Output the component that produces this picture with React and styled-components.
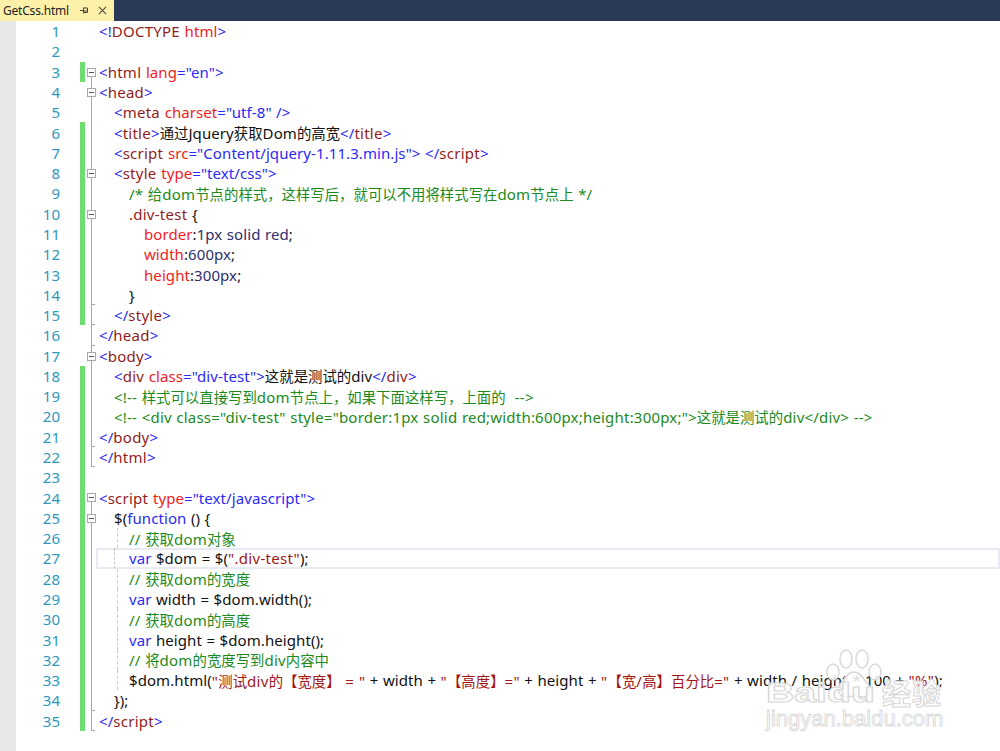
import React from "react";
import styled, { createGlobalStyle } from "styled-components";

const Global = createGlobalStyle`
  html, body { margin: 0; padding: 0; background: #fff; }
  body { width: 1000px; height: 751px; overflow: hidden; }
`;

const Page = styled.div`
  width: 1000px;
  height: 751px;
  display: flex;
  flex-direction: column;
  position: relative;
  overflow: hidden;
  font-family: "Noto Sans", "Noto Sans CJK SC", sans-serif;
`;

const TabBar = styled.div`
  height: 21px;
  flex: none;
  background: #2a3a56;
  display: flex;
`;

const Tab = styled.div`
  width: 114px;
  background: #fdf0a8;
  display: flex;
  align-items: center;
  padding-left: 3px;
  box-sizing: border-box;
  font-size: 12px;
  color: #222;
`;

const TabName = styled.span`
  width: 77px;
  white-space: nowrap;
  letter-spacing: -0.2px;
`;

const TabIcons = styled.span`
  display: flex;
  align-items: center;
  gap: 9px;
`;

const Editor = styled.div`
  flex: 1;
  display: flex;
`;

const Margin = styled.div`
  width: 16px;
  background: #e6e7e8;
  flex: none;
`;

const Lines = styled.div`
  flex: 1;
`;

const Row = styled.div`
  height: 20.29px;
  display: flex;
  align-items: center;
  position: relative;
  font-size: 15px;
  white-space: nowrap;
`;

const Num = styled.div`
  width: 44px;
  text-align: right;
  color: #2f97bb;
  font-size: 15px;
  flex: none;
`;

const Change = styled.div`
  width: 5px;
  margin-left: 20px;
  align-self: stretch;
  flex: none;
  background: ${(p) => (p.$on ? "#6edc6e" : "transparent")};
`;

const Fold = styled.div`
  width: 14px;
  align-self: stretch;
  flex: none;
  position: relative;
  &::before {
    content: "";
    display: ${(p) => (p.$kind ? "block" : "none")};
    position: absolute;
    left: 6px;
    top: ${(p) => (p.$first ? "50%" : "0")};
    bottom: 0;
    width: 1px;
    background: #a8a8a8;
  }
  &::after {
    content: "";
    display: ${(p) => (p.$kind === "end" ? "block" : "none")};
    position: absolute;
    left: 6px;
    bottom: 0;
    width: 4px;
    height: 1px;
    background: #a8a8a8;
  }
`;

const FoldBox = styled.span`
  position: absolute;
  left: 2px;
  top: 6px;
  width: 9px;
  height: 9px;
  box-sizing: border-box;
  border: 1px solid #a8a8a8;
  background: #fff;
  &::after {
    content: "";
    position: absolute;
    left: 1px;
    top: 3px;
    width: 5px;
    height: 1px;
    background: #555;
  }
`;

const Code = styled.div`
  padding-left: ${(p) => p.$indent * 15}px;
  position: relative;
  flex: 1;
  align-self: stretch;
  display: flex;
  align-items: center;
  ${(p) =>
    p.$current &&
    `box-shadow: inset 0 0 0 2px #e8e9f2; margin-left: -3px; padding-left: ${p.$indent * 15 + 3}px;`}
`;

const Guide = styled.span`
  position: absolute;
  left: 18px;
  top: 0;
  bottom: 0;
  border-left: 1px dashed #c8c8c8;
`;

const colors = {
  b: "#2a2af5",
  m: "#8f1d1d",
  r: "#f01c1c",
  k: "#111",
  g: "#1c8a1c",
  o: "#a31515",
  u: "#2e2e6e",
};

const spacing = { g: 0.2, o: 0.3, m: 0.25 };

const Tok = styled.span`
  color: ${(p) => colors[p.$c]};
  white-space: pre;
  letter-spacing: ${(p) => spacing[p.$c] ?? 0.08}px;
  word-spacing: 0.5px;
`;

const Cjk = styled.span`
  font-size: 14.4px;
  letter-spacing: 0;
`;

const Watermark = styled.div`
  position: absolute;
  left: 766px;
  top: 648px;
  width: 234px;
  height: 103px;
  pointer-events: none;
`;

const WmMain = styled.div`
  position: absolute;
  left: 0;
  top: 30px;
  font-family: "Liberation Sans", sans-serif;
  font-size: 28px;
  font-weight: 700;
  line-height: 30px;
  color: rgba(255, 255, 255, 0.85);
  -webkit-text-stroke: 1px #d6d6d6;
  white-space: nowrap;
  transform: scaleX(1.4);
  transform-origin: left center;
`;

const WmCn = styled.span`
  position: absolute;
  left: 116px;
  top: 28px;
  font-family: "Noto Sans CJK SC", sans-serif;
  font-size: 29px;
  font-weight: 700;
  line-height: 32px;
  letter-spacing: 1px;
  color: rgba(255, 255, 255, 0.85);
  -webkit-text-stroke: 1px #d6d6d6;
  white-space: nowrap;
`;

const WmUrl = styled.div`
  position: absolute;
  left: 0;
  top: 58px;
  font-family: "Liberation Sans", sans-serif;
  font-size: 22px;
  line-height: 26px;
  color: rgba(255, 255, 255, 0.85);
  -webkit-text-stroke: 1px #dcdcdc;
  white-space: nowrap;
`;

const Paw = styled.svg`
  position: absolute;
  left: 59px;
  top: 0;
`;

const t = (c, s) => [c, s];
const data = [
  [0, null, false, [t("b", "<!"), t("m", "DOCTYPE "), t("r", "html"), t("b", ">")]],
  [0, null, false, []],
  [0, "box1", true, [t("b", "<"), t("m", "html "), t("r", "lang"), t("b", '="en">')]],
  [0, "box", false, [t("b", "<"), t("m", "head"), t("b", ">")]],
  [1, "line", false, [t("b", "<"), t("m", "meta "), t("r", "charset"), t("b", '="utf-8" />')]],
  [1, "line", true, [t("b", "<"), t("m", "title"), t("b", ">"), t("k", "通过Jquery获取Dom的高宽"), t("b", "</"), t("m", "title"), t("b", ">")]],
  [1, "line", true, [t("b", "<"), t("m", "script "), t("r", "src"), t("b", '="Content/jquery-1.11.3.min.js">'), t("b", " </"), t("m", "script"), t("b", ">")]],
  [1, "box", true, [t("b", "<"), t("m", "style "), t("r", "type"), t("b", '="text/css">')]],
  [2, "line", true, [t("g", "/* 给dom节点的样式，这样写后，就可以不用将样式写在dom节点上 */")]],
  [2, "box", true, [t("m", ".div-test "), t("k", "{")]],
  [3, "line", true, [t("r", "border"), t("k", ":"), t("u", "1px solid red"), t("k", ";")]],
  [3, "line", true, [t("r", "width"), t("k", ":"), t("u", "600px"), t("k", ";")]],
  [3, "line", true, [t("r", "height"), t("k", ":"), t("u", "300px"), t("k", ";")]],
  [2, "end", true, [t("k", "}")]],
  [1, "end", true, [t("b", "</"), t("m", "style"), t("b", ">")]],
  [0, "end", false, [t("b", "</"), t("m", "head"), t("b", ">")]],
  [0, "box", false, [t("b", "<"), t("m", "body"), t("b", ">")]],
  [1, "line", true, [t("b", "<"), t("m", "div "), t("r", "class"), t("b", '="div-test">'), t("k", "这就是测试的div"), t("b", "</"), t("m", "div"), t("b", ">")]],
  [1, "line", true, [t("g", "<!-- 样式可以直接写到dom节点上，如果下面这样写，上面的  -->")]],
  [1, "line", true, [t("g", '<!-- <div class="div-test" style="border:1px solid red;width:600px;height:300px;">这就是测试的div</div> -->')]],
  [0, "end", true, [t("b", "</"), t("m", "body"), t("b", ">")]],
  [0, "end", true, [t("b", "</"), t("m", "html"), t("b", ">")]],
  [0, null, true, []],
  [0, "box1", true, [t("b", "<"), t("m", "script "), t("r", "type"), t("b", '="text/javascript">')]],
  [1, "box", true, [t("k", "$("), t("b", "function"), t("k", " () {")]],
  [2, "line", true, [t("g", "// 获取dom对象")], true],
  [2, "line", true, [t("b", "var"), t("k", " $dom = $("), t("o", '".div-test"'), t("k", ");")], true, true],
  [2, "line", true, [t("g", "// 获取dom的宽度")], true],
  [2, "line", true, [t("b", "var"), t("k", " width = $dom.width();")], true],
  [2, "line", true, [t("g", "// 获取dom的高度")], true],
  [2, "line", true, [t("b", "var"), t("k", " height = $dom.height();")], true],
  [2, "line", true, [t("g", "// 将dom的宽度写到div内容中")], true],
  [2, "line", true, [t("k", "$dom.html("), t("o", '"测试div的【宽度】 = "'), t("k", " + width + "), t("o", '"【高度】="'), t("k", " + height + "), t("o", '"【宽/高】百分比="'), t("k", " + width / height * 100 + "), t("o", '"%"'), t("k", ");")], true],
  [1, "end", true, [t("k", "});")]],
  [0, "end", true, [t("b", "</"), t("m", "script"), t("b", ">")]],
];

function FoldCell({ kind }) {
  const isBox = kind === "box" || kind === "box1";
  return (
    <Fold $kind={kind} $first={kind === "box1"}>
      {isBox && <FoldBox />}
    </Fold>
  );
}

const splitCjk = (s) =>
  s.split(/([\u3000-\u303f\u4e00-\u9fff\uff00-\uffef]+)/).map((part, i) =>
    i % 2 ? <Cjk key={i}>{part}</Cjk> : part
  );

export default function App() {
  return (
    <Page>
      <Global />
      <TabBar>
        <Tab>
          <TabName>GetCss.html</TabName>
          <TabIcons>
            <svg width="9" height="9" viewBox="0 0 9 9" fill="none" stroke="#444" strokeWidth="1">
              <path d="M0 4.5h3M3.5 1.5v6M3.5 2h4v4.5h-4M3.5 5h4" />
            </svg>
            <svg width="9" height="9" viewBox="0 0 10 10" fill="none" stroke="#555" strokeWidth="1.3">
              <path d="M1 1l8 8M9 1l-8 8" />
            </svg>
          </TabIcons>
        </Tab>
      </TabBar>
      <Editor>
        <Margin />
        <Lines>
          {data.map(([indent, kind, on, toks, guide, current], i) => (
            <Row key={i}>
              <Num>{i + 1}</Num>
              <Change $on={on} />
              <FoldCell kind={kind} />
              <Code $indent={indent} $current={current}>
                {guide && <Guide />}
                {toks.map(([c, s], j) => (
                  <Tok key={j} $c={c}>
                    {splitCjk(s)}
                  </Tok>
                ))}
              </Code>
            </Row>
          ))}
        </Lines>
      </Editor>
      <Watermark>
        <Paw width="58" height="52" viewBox="0 0 58 52" fill="rgba(255,255,255,0.85)" stroke="#d8d8d8" strokeWidth="1.5">
          <ellipse cx="8" cy="24" rx="6" ry="8" />
          <ellipse cx="21" cy="11" rx="6" ry="9" />
          <ellipse cx="37" cy="11" rx="6" ry="9" />
          <ellipse cx="50" cy="24" rx="6" ry="8" />
          <path d="M29 24c-7 0-9 7-13 11-5 5-3 14 5 14 3 0 5-1 8-1s5 1 8 1c8 0 10-9 5-14-4-4-6-11-13-11z" />
        </Paw>
        <WmMain>Baidu</WmMain>
        <WmCn>经验</WmCn>
        <WmUrl>jingyan.baidu.com</WmUrl>
      </Watermark>
    </Page>
  );
}
